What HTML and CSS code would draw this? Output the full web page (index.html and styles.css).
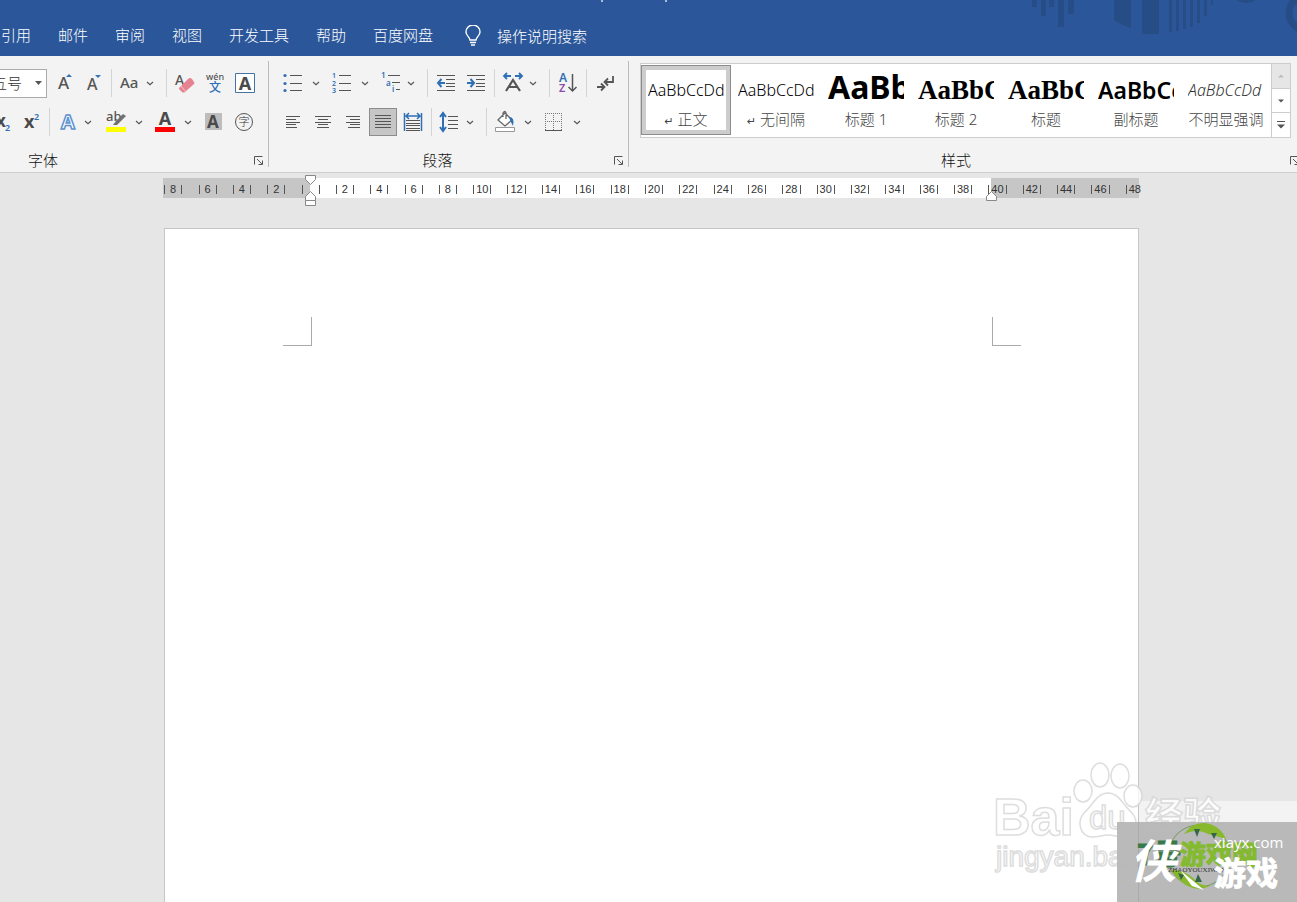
FILE: index.html
```html
<!DOCTYPE html>
<html lang="zh-CN">
<head>
<meta charset="utf-8">
<title>Word</title>
<link rel="stylesheet" href="styles.css">
</head>
<body>
<svg class="defs" aria-hidden="true">
  <symbol id="chev" viewBox="0 0 12 28"><path d="M3 13l3 2.600 3-2.600" fill="none" stroke="#555" stroke-width="1.200"/></symbol>
  <symbol id="launch" viewBox="0 0 10 10"><path d="M.5 8.500v-8h8M3 3l5 5M8.500 4.500v4H4.500" fill="none" stroke="#555"/></symbol>
</svg>
<header class="titlebar">
  <span class="bracket"></span>
  <svg class="deco" width="270" height="56" viewBox="1027 0 270 56" aria-hidden="true">
    <g fill="#274d86">
      <path d="M1032 0h5v7h-5zM1041 0h5v16h-5zM1049 0h5v7h-5zM1058 0h6v27h-6zM1068 0h6v14h-6z"/>
      <path d="M1114 0h17v28q-10-3-17-8zM1142 0h17v34h-17z"/>
      <path d="M1169 0h3v32h-3zM1176 0h3v31h-3zM1183 0h3v29h-3zM1190 0h3v27h-3zM1197 0h3v23h-3zM1204 0h3v16h-3zM1211 0h2v5h-2z"/>
      <path d="M1236 0h20q-10 6-20 0z"/>
    </g>
    <circle cx="1306" cy="13" r="17" fill="none" stroke="#274d86" stroke-width="7"/>
  </svg>
  <nav class="tabs">
    <a href="#">引用</a><a href="#">邮件</a><a href="#">审阅</a><a href="#">视图</a><a href="#">开发工具</a><a href="#">帮助</a><a href="#">百度网盘</a>
  </nav>
  <button class="tell">
    <svg width="16" height="22" viewBox="0 0 16 22" fill="none" stroke="#fff" stroke-width="1.400"><path d="M5 15c0-3-4-4-4-8a7 7 0 0 1 14 0c0 4-4 5-4 8zM5 17.500h6M6 20h4"/></svg>
    <span>操作说明搜索</span>
  </button>
</header>

<section class="ribbon">
  <div class="group font">
    <div class="row">
      <select class="size" aria-label="字号"><option>五号</option></select>
      <button class="btn" aria-label="增大字号"><svg viewBox="0 0 28 28"><text x="7" y="20" class="ic" font-size="17">A</text><path d="M15 8l3-3 3 3z" fill="#3a70b0"/></svg></button>
      <button class="btn" aria-label="减小字号"><svg viewBox="0 0 28 28"><text x="6" y="21" class="ic" font-size="16">A</text><path d="M14 6h6l-3 3z" fill="#3a70b0"/></svg></button>
      <i class="sep near"></i>
      <button class="split tight g2" aria-label="更改大小写"><svg class="i" viewBox="0 0 28 28"><text x="4" y="19" class="ic" font-size="15">Aa</text></svg><svg class="c"><use href="#chev"/></svg></button>
      <i class="sep far"></i>
      <button class="btn" aria-label="清除格式"><svg viewBox="0 0 28 28"><text x="4" y="16" class="ic" font-size="14">A</text><path d="M8 19l9-9q2-2 4 0l2 3q1 1 0 2l-9 8q-2 1-3 0l-3-3z" fill="#e78293"/><path d="M10 17l5 6" stroke="#f8c6cd"/></svg></button>
      <button class="btn" aria-label="拼音指南"><svg viewBox="0 0 28 28"><text x="14" y="11" class="ic" font-size="9" text-anchor="middle">wén</text><text x="14" y="23" class="cj bold" font-size="12" text-anchor="middle" fill="#2f6fb5">文</text></svg></button>
      <button class="btn" aria-label="字符边框"><svg viewBox="0 0 28 28"><path d="M4.500 4.500h19v19h-19z" fill="#fff" stroke="#4673a6"/><text x="14" y="21" class="ic b" font-size="18" text-anchor="middle">A</text></svg></button>
    </div>
    <div class="row">
      <button class="btn cut" aria-label="下标"><svg viewBox="0 0 28 28"><text x="7" y="19" class="ic b" font-size="17">x</text><text x="16" y="23" font-size="9" class="ic u">2</text></svg></button>
      <button class="btn" aria-label="上标"><svg viewBox="0 0 28 28"><text x="5" y="20" class="ic b" font-size="18">x</text><text x="15" y="12" font-size="9" class="ic u">2</text></svg></button>
      <i class="sep near"></i>
      <button class="split tight g2" aria-label="文本效果"><svg class="i" viewBox="0 0 28 28"><text x="14" y="21" font-size="20" text-anchor="middle" class="fx">A</text></svg><svg class="c"><use href="#chev"/></svg></button>
      <button class="split g6" aria-label="突出显示颜色"><svg class="i" viewBox="0 0 28 28"><text x="4" y="13" class="ic" font-size="13">ab</text><path d="M21 6l3 2-9 9h-4l3-4z" fill="#707070"/><path d="M4 19h20v5H4z" fill="#ff0"/></svg><svg class="c"><use href="#chev"/></svg></button>
      <button class="split g4" aria-label="字体颜色"><svg class="i" viewBox="0 0 28 28"><text x="14" y="17" class="ic b" font-size="18" text-anchor="middle">A</text><path d="M4 19h20v5H4z" fill="red"/></svg><svg class="c"><use href="#chev"/></svg></button>
      <button class="btn g4" aria-label="字符底纹"><svg viewBox="0 0 28 28"><path d="M5 5h17v17H5z" fill="#bdbdbd"/><text x="13" y="20" class="ic b" font-size="17" text-anchor="middle">A</text></svg></button>
      <button class="btn" aria-label="带圈字符"><svg viewBox="0 0 28 28"><circle cx="14" cy="14" r="8.500" fill="none" stroke="#555"/><text x="14" y="18" class="cj" font-size="11" text-anchor="middle" fill="#333">字</text></svg></button>
    </div>
    <div class="caption"><span>字体</span><button class="launch" aria-label="字体设置"><svg><use href="#launch"/></svg></button></div>
  </div>

  <div class="group para">
    <div class="row">
      <button class="split" aria-label="项目符号"><svg class="i" viewBox="0 0 28 28"><path d="M11 6.500h12M11 14.500h12M11 21.500h12" stroke="#555"/><g fill="#2f6fb5"><circle cx="6" cy="6.500" r="1.600"/><circle cx="6" cy="14.500" r="1.600"/><circle cx="6" cy="21.500" r="1.600"/></g></svg><svg class="c"><use href="#chev"/></svg></button>
      <button class="split g4" aria-label="编号"><svg class="i" viewBox="0 0 28 28"><path d="M11 6.500h12M11 14.500h12M11 21.500h12" stroke="#555"/><g class="ic u" font-size="7"><text x="4" y="9">1</text><text x="4" y="17">2</text><text x="4" y="24">3</text></g></svg><svg class="c"><use href="#chev"/></svg></button>
      <button class="split tight g4" aria-label="多级列表"><svg class="i" viewBox="0 0 28 28"><path d="M11 6.500h12M15 13.500h8M19 20.500h4" stroke="#555"/><g class="ic u" font-size="8"><text x="4" y="9">1</text><text x="9" y="17">a</text><text x="15" y="23">i</text></g></svg><svg class="c"><use href="#chev"/></svg></button>
      <i class="sep far"></i>
      <button class="btn" aria-label="减少缩进"><svg viewBox="0 0 28 28"><path d="M5 6.500h18M14 10.500h9M14 14.500h9M14 17.500h9M5 21.500h18" stroke="#555"/><path d="M13 14H6M9.500 10L6 14l3.500 4" fill="none" stroke="#2f6fb5" stroke-width="2"/></svg></button>
      <button class="btn" aria-label="增加缩进"><svg viewBox="0 0 28 28"><path d="M5 6.500h18M14 10.500h9M14 14.500h9M14 17.500h9M5 21.500h18" stroke="#555"/><path d="M5 14h7M8.500 10l3.500 4-3.500 4" fill="none" stroke="#2f6fb5" stroke-width="2"/></svg></button>
      <i class="sep"></i>
      <button class="split tight" aria-label="中文版式"><svg class="i" viewBox="0 0 28 28"><path d="M7 22l7-11 7 11M10 18h8" fill="none" stroke="#555" stroke-width="2.200"/><path d="M12 7H5M8 4L5 7l3 3M16 7h7M20 4l3 3-3 3" fill="none" stroke="#2f6fb5" stroke-width="1.800"/></svg><svg class="c"><use href="#chev"/></svg></button>
      <i class="sep far"></i>
      <button class="btn" aria-label="排序"><svg viewBox="0 0 28 28"><text x="5" y="13" class="ic u" font-size="12">A</text><text x="5" y="23" class="ic v" font-size="11">Z</text><path d="M18.500 5v17M14.500 18l4 4 4-4" fill="none" stroke="#555" stroke-width="1.500"/></svg></button>
      <i class="sep"></i>
      <button class="btn" aria-label="显示编辑标记"><svg viewBox="0 0 28 28"><path d="M22 7v6h-8M17 9.500L13.500 13l3.500 3.500M6 18h7M10 14.500l3.500 3.500-3.500 3.500" fill="none" stroke="#555" stroke-width="1.800"/></svg></button>
    </div>
    <div class="row">
      <button class="btn" aria-label="左对齐"><svg viewBox="0 0 28 28"><path d="M7 8.500h14M7 11.500h10M7 14.500h14M7 16.500h10M7 19.500h11" stroke="#555"/></svg></button>
      <button class="btn" aria-label="居中"><svg viewBox="0 0 28 28"><path d="M6 8.500h16M9 11.500h10M6 14.500h16M9 16.500h10M8 19.500h12" stroke="#555"/></svg></button>
      <button class="btn" aria-label="右对齐"><svg viewBox="0 0 28 28"><path d="M7 8.500h14M11 11.500h10M7 14.500h14M11 16.500h10M9 19.500h12" stroke="#555"/></svg></button>
      <button class="btn on" aria-label="两端对齐" aria-pressed="true"><svg viewBox="0 0 28 28"><path d="M6 7.500h16M6 10.500h16M6 13.500h16M6 16.500h16M6 19.500h16" stroke="#555"/></svg></button>
      <button class="btn" aria-label="分散对齐"><svg viewBox="0 0 28 28"><path d="M5.500 5v18M22.500 5v18M7 8h14M10 5L7 8l3 3M18 5l3 3-3 3" fill="none" stroke="#2f6fb5" stroke-width="1.500"/><path d="M7 12.500h14M7 15.500h14M7 17.500h14M7 20.500h14M7 22.500h14" stroke="#555"/></svg></button>
      <i class="sep"></i>
      <button class="split tight" aria-label="行距"><svg class="i" viewBox="0 0 28 28"><path d="M7 6v16M4 9l3-4 3 4M4 19l3 4 3-4" fill="none" stroke="#2f6fb5" stroke-width="2"/><path d="M12 8.500h10M12 12.500h10M12 16.500h10M12 20.500h10" stroke="#555"/></svg><svg class="c"><use href="#chev"/></svg></button>
      <i class="sep far"></i>
      <button class="split" aria-label="底纹"><svg class="i" viewBox="0 0 28 28"><path d="M14 5l7 7-7 6-7-6zM12 9V5q2-3 3 0v6" fill="#fff" stroke="#666" stroke-width="1.300"/><path d="M18 9q6 0 4 9-3-5-4-9z" fill="#2f6fb5"/><path d="M4.500 19.500h19v4h-19z" fill="#fff" stroke="#999"/></svg><svg class="c"><use href="#chev"/></svg></button>
      <button class="split g4" aria-label="边框"><svg class="i" viewBox="0 0 28 28"><path d="M5.500 5v17M13.500 5v17M21.500 5v17M5 5.500h17M5 13.500h17" stroke="#777" stroke-dasharray="1 1"/><path d="M5 22.500h17" stroke="#555"/></svg><svg class="c"><use href="#chev"/></svg></button>
    </div>
    <div class="caption"><span>段落</span><button class="launch" aria-label="段落设置"><svg><use href="#launch"/></svg></button></div>
  </div>

  <div class="group styles">
    <div class="gallery">
      <button class="style sel"><span class="pv">AaBbCcDd</span><span><small>↵</small> 正文</span></button>
      <button class="style"><span class="pv">AaBbCcDd</span><span><small>↵</small> 无间隔</span></button>
      <button class="style"><span class="pv h1">AaBb</span><span>标题 1</span></button>
      <button class="style"><span class="pv h2">AaBbC</span><span>标题 2</span></button>
      <button class="style"><span class="pv h2">AaBbC</span><span>标题</span></button>
      <button class="style"><span class="pv sub">AaBbCc</span><span>副标题</span></button>
      <button class="style"><span class="pv em">AaBbCcDd</span><span>不明显强调</span></button>
      <div class="scroll">
        <button class="off" aria-label="向上"><svg viewBox="0 0 8 8"><path d="M1 5.500l3-3 3 3z" fill="#bbb"/></svg></button>
        <button aria-label="向下"><svg viewBox="0 0 8 8"><path d="M1 2.500h6l-3 3z" fill="#555"/></svg></button>
        <button aria-label="其他"><svg viewBox="0 0 8 8"><path d="M0 .5h8" stroke="#555"/><path d="M0 3.500h8l-4 4z" fill="#555"/></svg></button>
      </div>
    </div>
    <div class="caption"><span>样式</span><button class="launch" aria-label="样式设置"><svg><use href="#launch"/></svg></button></div>
  </div>
</section>

<main class="workspace">
  <div class="ruler">
    <div class="marks">
      <span>8</span><span>6</span><span>4</span><span>2</span><span></span><span>2</span><span>4</span><span>6</span><span>8</span><span>10</span><span>12</span><span>14</span><span>16</span><span>18</span><span>20</span><span>22</span><span>24</span><span>26</span><span>28</span><span>30</span><span>32</span><span>34</span><span>36</span><span>38</span><span>40</span><span>42</span><span>44</span><span>46</span><span class="end">48</span>
    </div>
    <svg class="indent left" viewBox="0 0 12 32" aria-hidden="true"><path d="M.5.500h10v4l-5 5-5-5zM.5 25.500v-4l5-5 5 5v4zM.5 25.500h10v5H.5z" fill="#fff" stroke="#888"/></svg>
    <svg class="indent right" viewBox="0 0 12 32" aria-hidden="true"><path d="M.5 25.500v-4l5-5 5 5v4z" fill="#fff" stroke="#888"/></svg>
  </div>
  <article class="page"><i class="corner tl"></i><i class="corner tr"></i></article>
</main>

<svg class="watermark" width="317" height="152" viewBox="980 750 317 152" aria-hidden="true">
  <path d="M1139 801h158v21h-158z" fill="#fff" opacity=".5"/>
  <g class="wm">
    <text x="993" y="835" font-size="52" font-weight="700">Bai</text>
    <ellipse cx="1083" cy="791" rx="9" ry="11"/><ellipse cx="1100" cy="775" rx="9" ry="12"/><ellipse cx="1120" cy="776" rx="9" ry="12"/><ellipse cx="1133" cy="796" rx="9" ry="11"/>
    <path d="M1108 793c-11 0-15 12-24 20-7 8-5 24 9 24 6 0 9-2 15-2s9 2 15 2c14 0 16-16 9-24-9-8-13-20-24-20z"/>
    <text x="1089" y="829" font-size="33">du</text>
    <text x="1145" y="829" font-size="38" font-weight="700" class="cj">经验</text>
    <text x="996" y="866" font-size="28">jingyan.baidu.com</text>
  </g>
  <path d="M1117 822h180v80h-180z" fill="#b7b7b7" opacity=".96"/>
  <path d="M1138.500 822v80" stroke="#aaa"/>
  <circle cx="1199" cy="856" r="31" fill="none" stroke="#729956"/>
  <path d="M1184 834q8-12 21-11 15 2 21 16-13-4-18-5-10-6-24 0zM1171 870q12-1 22 8 7 8 17 8-21 10-39-16z" fill="#88b92d"/>
  <path d="M1194 829h6l-3 8zM1211 833h6l-3 6zM1178 873l6 2-3 5zM1198 874l4 8h-7z" fill="#35664a"/>
  <text x="1137" y="865" font-size="28" font-weight="700" fill="#3a7949" stroke="#3a7949" class="cj">7号</text>
  <text x="1180" y="864" font-size="26" font-weight="700" fill="#83ba2f" stroke="#83ba2f" class="cj">游戏网</text>
  <text x="1168" y="872" font-size="7" fill="#333" class="serif">ZHAOYOUXIWANG</text>
  <text x="1130" y="878" font-size="46" font-weight="700" fill="#fff" class="cj brush">侠</text>
  <path d="M1180 870l24 20-12-4z" fill="#fff"/>
  <text x="1214" y="848" font-size="15" fill="#fff" class="lat">xiayx.com</text>
  <text x="1214" y="885" font-size="32" font-weight="700" fill="#fff" stroke="#fff" class="cj">游戏</text>
</svg>
</body>
</html>
```

FILE: styles.css
```css
* { box-sizing: border-box; }
body {
  margin: 0;
  min-height: 100vh;
  display: flex;
  flex-direction: column;
  position: relative;
  overflow: hidden;
  background: #e6e6e6;
  color: #333;
  font: 300 15px/20px "Noto Sans", "Noto Sans CJK SC", sans-serif;
}
button, select { font: inherit; color: inherit; background: none; border: 0; padding: 0; margin: 0; }
svg { display: block; flex: none; }
.defs { position: absolute; width: 0; height: 0; }

.titlebar {
  position: relative;
  display: flex;
  align-items: center;
  height: 56px;
  padding: 16px 0 0 1px;
  background: #2b579a;
  color: #fff;
  font-family: "Noto Sans CJK SC", sans-serif;
}
.deco { position: absolute; right: 0; top: 0; }
.bracket { position: absolute; left: 601px; top: 0; width: 66px; height: 2px; border: solid #a9bddb; border-width: 0 2px; }
.tabs { display: flex; gap: 27px; padding-bottom: 2px; }
.tabs a { color: inherit; text-decoration: none; white-space: nowrap; }
.tell { display: flex; align-items: center; gap: 16px; margin-left: 32px; white-space: nowrap; }

.ribbon {
  display: flex;
  flex: none;
  background: #f3f3f3;
  border-bottom: 1px solid #cfcfcf;
  padding: 5px 0;
  overflow: hidden;
}
.group { display: flex; flex-direction: column; flex: none; height: 106px; }
.font, .para { padding-top: 8px; border-right: 1px solid #bcbcbc; }
.font { width: 269px; }
.para { width: 360px; padding-left: 10px; }
.styles { flex: 1 0 671px; padding: 2px 0 0 11px; }
.row { display: flex; align-items: center; gap: 2px; height: 28px; margin-bottom: 11px; }
.btn, .split { display: flex; flex: none; height: 28px; }
.btn { width: 28px; }
.btn svg, .i { width: 28px; height: 28px; }
.c { width: 12px; height: 28px; }
.split { gap: 3px; }
.split.tight { gap: 0; }
.g2 { margin-left: 2px; }
.g4 { margin-left: 4px; }
.g6 { margin-left: 6px; }
.cut { margin-left: -11px; }
.on { background: #c6c6c6; outline: 1px solid #8c8c8c; outline-offset: -1px; }
.sep { width: 1px; height: 28px; margin: 0 2px; background: #d4d4d4; flex: none; }
.sep.far { margin-left: 8px; }
.sep.near { margin: 0; }
.size {
  appearance: none;
  width: 64px;
  height: 29px;
  margin: 0 2px 0 -17px;
  padding-left: 8px;
  border: 1px solid #ababab;
  background: #fff url("data:image/svg+xml,%3Csvg xmlns='http://www.w3.org/2000/svg' width='7' height='4'%3E%3Cpath d='M0 0h7L3.500 4z' fill='%23555'/%3E%3C/svg%3E") no-repeat right 4px center;
}
.ic { font-family: "Noto Sans", sans-serif; font-weight: 500; fill: #555; }
.ic.b { font-weight: 700; fill: #4a4a4a; }
.ic.u { fill: #2f6fb5; font-weight: 600; }
.ic.v { fill: #8d4bab; font-weight: 600; }
.cj { font-family: "Noto Sans CJK SC", sans-serif; }
.bold { font-weight: 500; }
.fx { font-family: "Noto Sans", sans-serif; font-weight: 700; fill: #fff; stroke: #5b92cf; stroke-width: 1.500px; }

.caption { display: flex; align-items: center; justify-content: center; position: relative; height: 20px; margin-top: 3px; color: #111; }
.font .caption { justify-content: flex-start; padding-left: 28px; }
.para .caption { padding-right: 32px; }
.styles .caption { margin-top: 12px; padding-right: 28px; }
.launch { position: absolute; right: 4px; top: 6px; }
.styles .launch { right: 0; }
.launch svg { width: 10px; height: 10px; }

.gallery { display: flex; flex: none; height: 75px; width: 651px; border: 1px solid #cdcdcd; background: #fff; }
.style {
  display: flex;
  flex-direction: column;
  align-items: center;
  flex: 0 0 90px;
  height: 70px;
  margin-top: 1px;
  padding-top: 5px;
  color: #444;
  white-space: nowrap;
}
.style.sel { border: 1px solid #8c8c8c; box-shadow: inset 0 0 0 4px #cdcdcd; padding-top: 4px; }
.style small { font: 11px "DejaVu Sans", sans-serif; }
.pv { width: 76px; height: 40px; font-size: 16px; line-height: 40px; margin-bottom: -1px; text-align: left; overflow: hidden; color: #000; }
.pv.h1 { font-size: 32px; font-weight: 700; line-height: 34px; }
.pv.h2 { font: 700 27px/40px "Liberation Serif", serif; }
.pv.sub { font-size: 23px; font-weight: 600; line-height: 40px; }
.pv.em { font-style: italic; color: #333; }
.scroll { display: flex; flex: 1; flex-direction: column; border-left: 1px solid #cdcdcd; }
.scroll button { display: flex; flex: 1; align-items: center; justify-content: center; }
.scroll button + button { border-top: 1px solid #cdcdcd; }
.scroll .off { background: #e6e6e6; }
.scroll svg { width: 8px; height: 8px; }

.workspace { flex: 1; display: flex; flex-direction: column; padding: 5px 158px 0 163px; }
.ruler { position: relative; height: 20px; background: linear-gradient(90deg, #c6c6c6 15.1%, #fff 15.1% 84.8%, #c6c6c6 84.8%); }
.marks { display: grid; grid-template-columns: repeat(29, 1fr); align-items: center; height: 22px; margin: 0 -13px 0 -7px; font: 11px/11px "Liberation Sans", sans-serif; }
.marks span { justify-self: center; min-width: 18px; height: 11px; text-align: center; background: linear-gradient(#555, #555) left center / 1px 9px no-repeat, linear-gradient(#555, #555) right center / 1px 9px no-repeat; padding: 0 3px; }
.marks .end { background: linear-gradient(#555, #555) left center / 1px 9px no-repeat; }
.indent { position: absolute; top: -3px; width: 12px; height: 32px; margin-left: -5px; }
.left { left: 15.1%; }
.right { left: 84.8%; }
.page { flex: 1; display: flex; justify-content: space-between; margin: 30px 0 0 1px; padding: 88px 117px 0 118px; background: #fff; border: 1px solid #c6c6c6; border-bottom: 0; }
.corner { width: 29px; height: 29px; border-bottom: 1px solid #aaa; }
.tl { border-right: 1px solid #aaa; }
.tr { border-left: 1px solid #aaa; }

.watermark { position: absolute; right: 0; bottom: 0; }
.wm { fill: #fff; stroke: #d6d6d6; stroke-width: 1.500px; opacity: .8; font-family: "Liberation Sans", sans-serif; }
.serif { font-family: "Liberation Serif", serif; }
.brush { font-style: italic; }
.lat { font-family: "Open Sans", sans-serif; font-weight: 400; }
```
